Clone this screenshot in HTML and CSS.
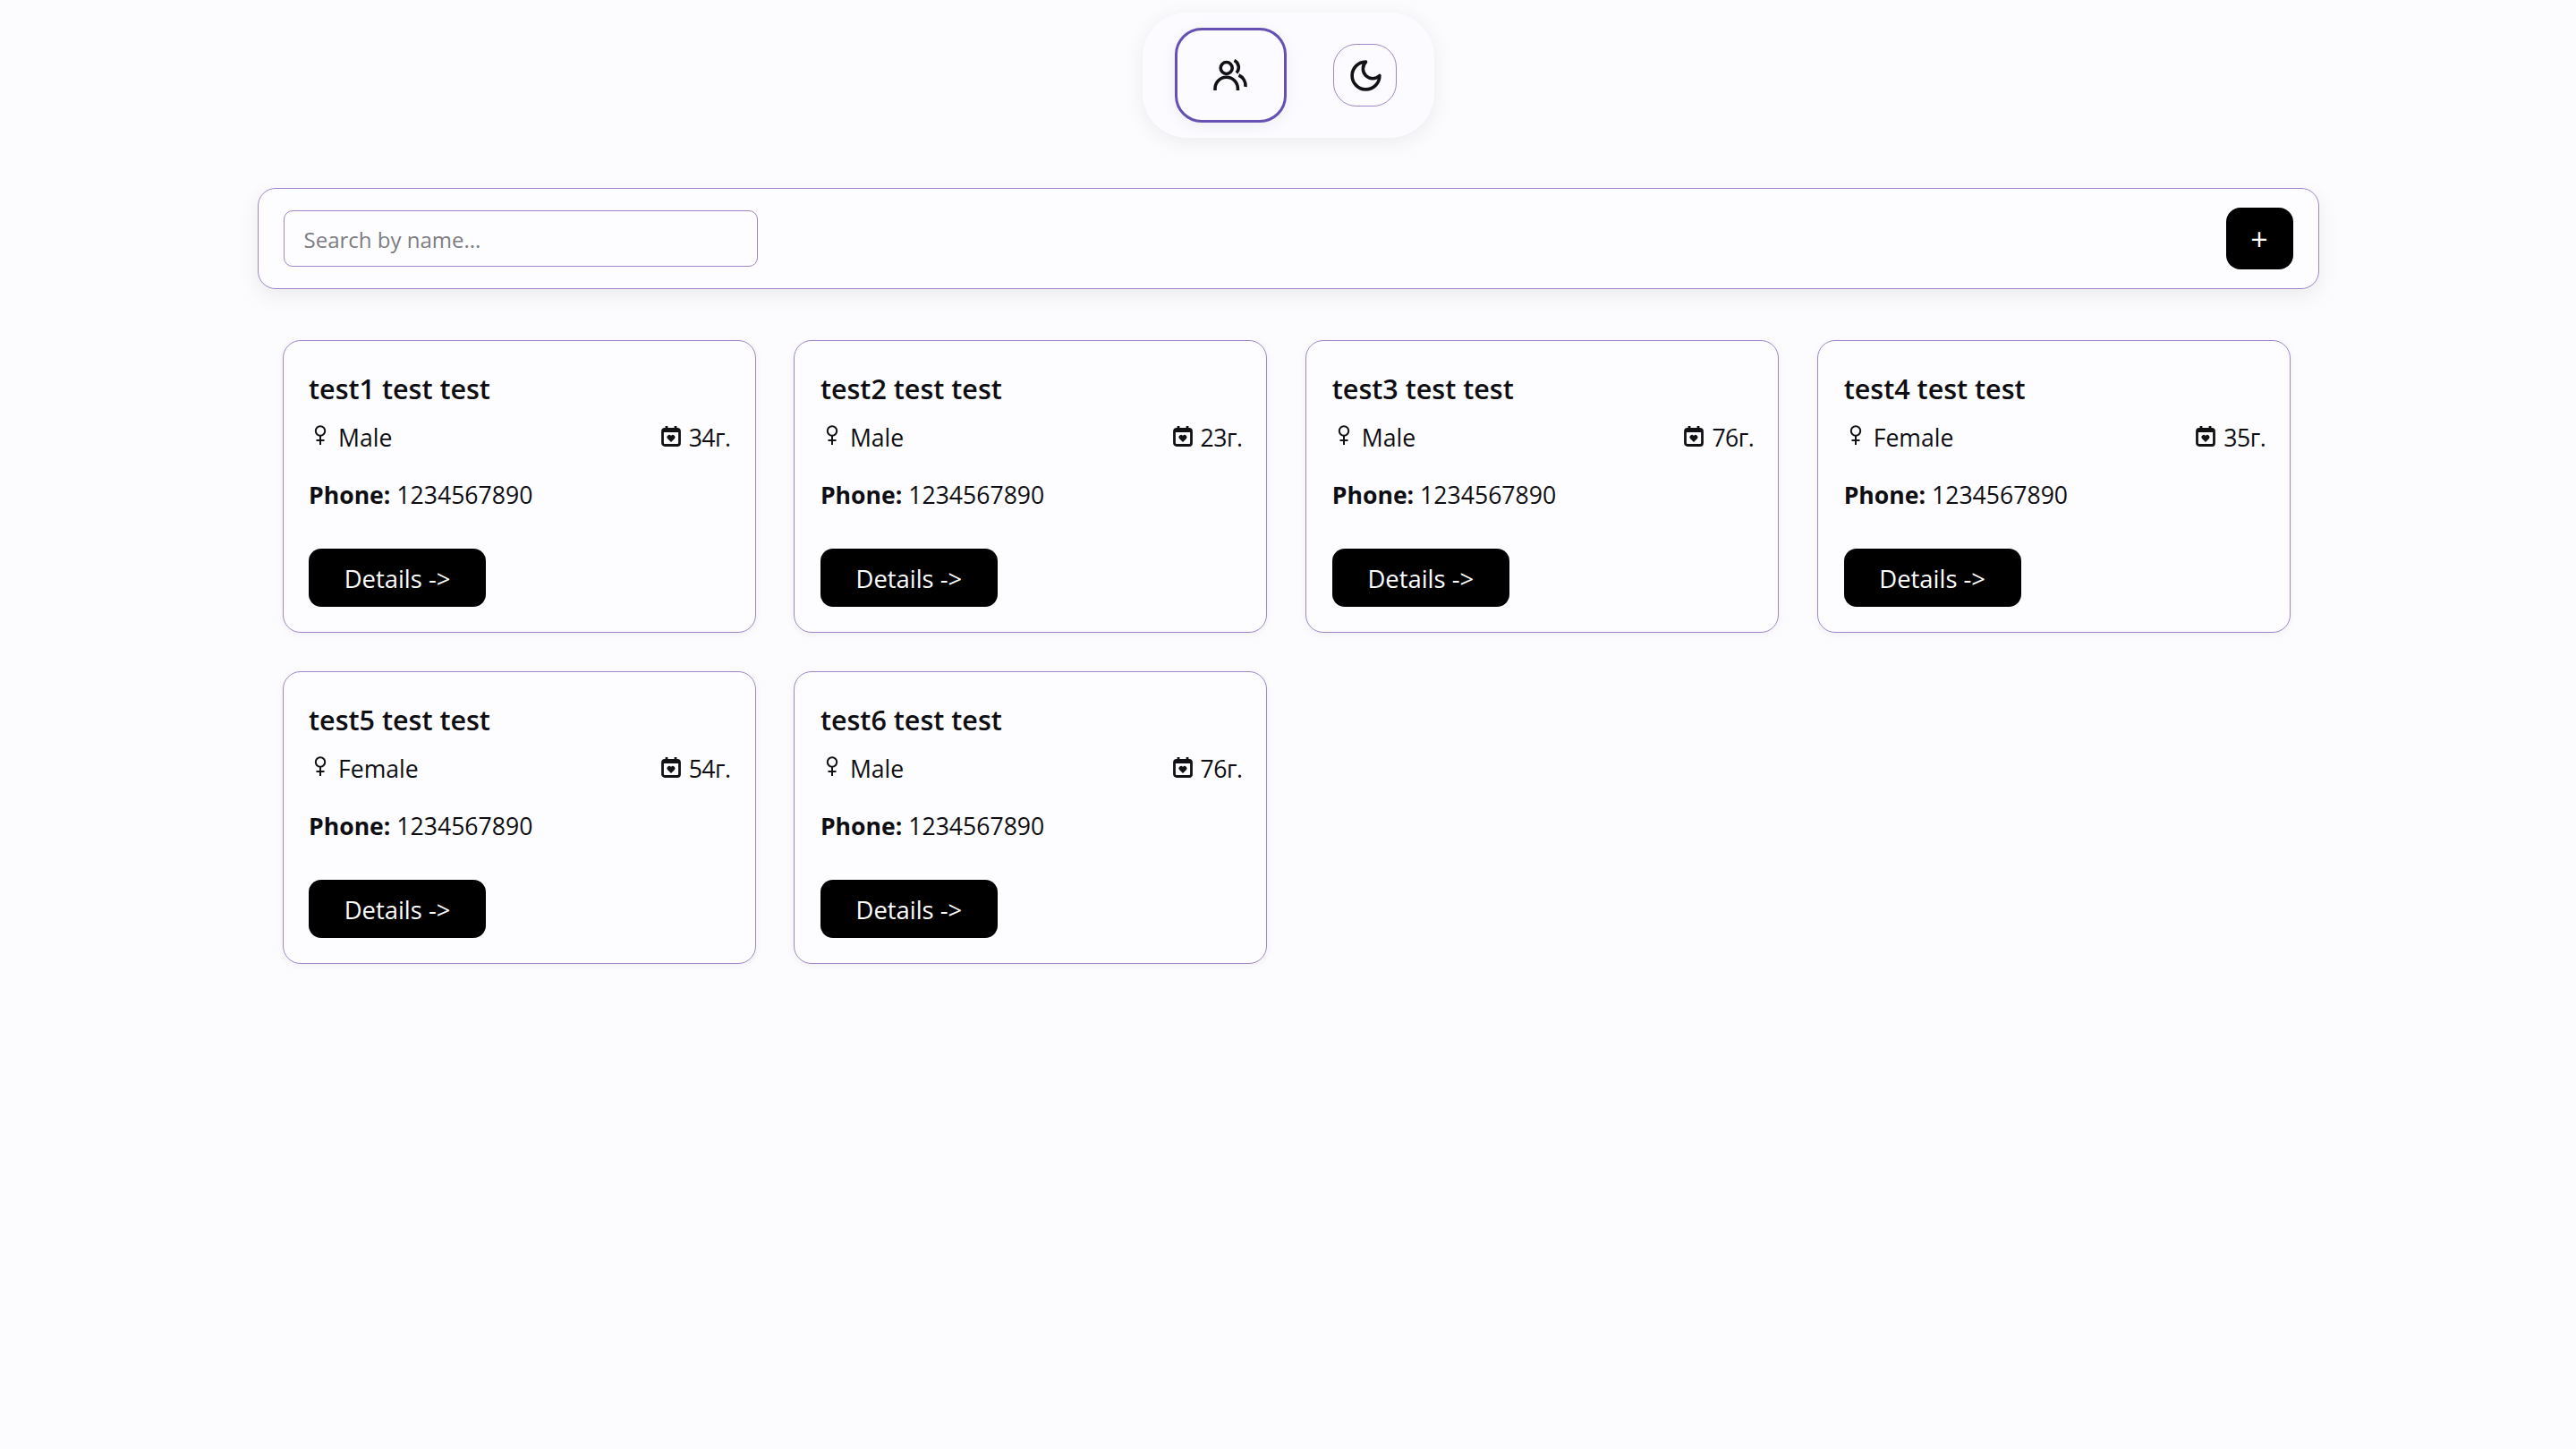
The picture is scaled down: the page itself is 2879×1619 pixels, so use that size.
FILE: index.html
```html
<!DOCTYPE html>
<html lang="en">
<head>
    <meta charset="UTF-8">
    <title>Patients</title>
    <link rel="stylesheet" href="styles.css">
</head>
<body>
    <div class="nav-wrap">
        <nav class="nav-pill">
            <button class="nav-btn active">
                <svg class="icon-users" viewBox="0 0 40 36"><circle cx="15.7" cy="10" r="6.5"/><path d="M3 35v-2a12.7 12.7 0 0 1 25.400 0v2"/><path d="M24.500 1.500a9 9 0 0 1 2.500 14"/><path d="M29.500 18a13 13 0 0 1 7.500 13"/></svg>
            </button>
            <button class="nav-btn theme">
                <svg class="icon-moon" viewBox="0 0 24 24"><path d="M12 3a6 6 0 0 0 9 9 9 9 0 1 1-9-9Z"/></svg>
            </button>
        </nav>
    </div>

    <main class="content">
        <div class="search-bar">
            <input class="search-input" type="text" placeholder="Search by name...">
            <button class="add-btn">+</button>
        </div>

        <section class="cards">
            <article class="card">
                <h3 class="card-name">test1 test test</h3>
                <div class="card-meta">
                    <span class="meta-item"><svg class="icon-gender" viewBox="0 0 14 22"><circle cx="7" cy="6.5" r="5.2"/><path d="M7 12v10M2.500 17h9"/></svg>Male</span>
                    <span class="meta-item age"><svg class="icon-cal" viewBox="0 0 22 23"><rect x="1.5" y="3.5" width="19" height="18" rx="2.5"/><path d="M6 0v4M16 0v4M1.500 5.500h19"/><path class="heart" d="M11 18l-4-4a2.400 2.400 0 0 1 4-3 2.400 2.400 0 0 1 4 3z"/></svg>34г.</span>
                </div>
                <p class="card-phone"><b>Phone:</b> 1234567890</p>
                <button class="details-btn">Details -&gt;</button>
            </article>
            <article class="card">
                <h3 class="card-name">test2 test test</h3>
                <div class="card-meta">
                    <span class="meta-item"><svg class="icon-gender" viewBox="0 0 14 22"><circle cx="7" cy="6.5" r="5.2"/><path d="M7 12v10M2.500 17h9"/></svg>Male</span>
                    <span class="meta-item age"><svg class="icon-cal" viewBox="0 0 22 23"><rect x="1.5" y="3.5" width="19" height="18" rx="2.5"/><path d="M6 0v4M16 0v4M1.500 5.500h19"/><path class="heart" d="M11 18l-4-4a2.400 2.400 0 0 1 4-3 2.400 2.400 0 0 1 4 3z"/></svg>23г.</span>
                </div>
                <p class="card-phone"><b>Phone:</b> 1234567890</p>
                <button class="details-btn">Details -&gt;</button>
            </article>
            <article class="card">
                <h3 class="card-name">test3 test test</h3>
                <div class="card-meta">
                    <span class="meta-item"><svg class="icon-gender" viewBox="0 0 14 22"><circle cx="7" cy="6.5" r="5.2"/><path d="M7 12v10M2.500 17h9"/></svg>Male</span>
                    <span class="meta-item age"><svg class="icon-cal" viewBox="0 0 22 23"><rect x="1.5" y="3.5" width="19" height="18" rx="2.5"/><path d="M6 0v4M16 0v4M1.500 5.500h19"/><path class="heart" d="M11 18l-4-4a2.400 2.400 0 0 1 4-3 2.400 2.400 0 0 1 4 3z"/></svg>76г.</span>
                </div>
                <p class="card-phone"><b>Phone:</b> 1234567890</p>
                <button class="details-btn">Details -&gt;</button>
            </article>
            <article class="card">
                <h3 class="card-name">test4 test test</h3>
                <div class="card-meta">
                    <span class="meta-item"><svg class="icon-gender" viewBox="0 0 14 22"><circle cx="7" cy="6.5" r="5.2"/><path d="M7 12v10M2.500 17h9"/></svg>Female</span>
                    <span class="meta-item age"><svg class="icon-cal" viewBox="0 0 22 23"><rect x="1.5" y="3.5" width="19" height="18" rx="2.5"/><path d="M6 0v4M16 0v4M1.500 5.500h19"/><path class="heart" d="M11 18l-4-4a2.400 2.400 0 0 1 4-3 2.400 2.400 0 0 1 4 3z"/></svg>35г.</span>
                </div>
                <p class="card-phone"><b>Phone:</b> 1234567890</p>
                <button class="details-btn">Details -&gt;</button>
            </article>
            <article class="card">
                <h3 class="card-name">test5 test test</h3>
                <div class="card-meta">
                    <span class="meta-item"><svg class="icon-gender" viewBox="0 0 14 22"><circle cx="7" cy="6.5" r="5.2"/><path d="M7 12v10M2.500 17h9"/></svg>Female</span>
                    <span class="meta-item age"><svg class="icon-cal" viewBox="0 0 22 23"><rect x="1.5" y="3.5" width="19" height="18" rx="2.5"/><path d="M6 0v4M16 0v4M1.500 5.500h19"/><path class="heart" d="M11 18l-4-4a2.400 2.400 0 0 1 4-3 2.400 2.400 0 0 1 4 3z"/></svg>54г.</span>
                </div>
                <p class="card-phone"><b>Phone:</b> 1234567890</p>
                <button class="details-btn">Details -&gt;</button>
            </article>
            <article class="card">
                <h3 class="card-name">test6 test test</h3>
                <div class="card-meta">
                    <span class="meta-item"><svg class="icon-gender" viewBox="0 0 14 22"><circle cx="7" cy="6.5" r="5.2"/><path d="M7 12v10M2.500 17h9"/></svg>Male</span>
                    <span class="meta-item age"><svg class="icon-cal" viewBox="0 0 22 23"><rect x="1.5" y="3.5" width="19" height="18" rx="2.5"/><path d="M6 0v4M16 0v4M1.500 5.500h19"/><path class="heart" d="M11 18l-4-4a2.400 2.400 0 0 1 4-3 2.400 2.400 0 0 1 4 3z"/></svg>76г.</span>
                </div>
                <p class="card-phone"><b>Phone:</b> 1234567890</p>
                <button class="details-btn">Details -&gt;</button>
            </article>
        </section>
    </main>
</body>
</html>
```

FILE: styles.css
```css
* {
    box-sizing: border-box;
}
html, body {
    height: 100%;
}
body {
    margin: 0;
    background-color: #fcfcff;
    color: #0d0d12;
    font-family: "Open Sans", "Noto Sans", sans-serif;
    font-size: 26.6px;
}
button {
    font-family: inherit;
    cursor: pointer;
}

.nav-wrap {
    display: flex;
    justify-content: center;
    padding-top: 14px;
}
.nav-pill {
    display: flex;
    align-items: center;
    gap: 52px;
    width: 326px;
    height: 140px;
    padding: 0 42px 0 36px;
    border-radius: 50px;
    background-color: #fcfbff;
    box-shadow: 0 4px 24px rgba(0, 0, 0, 0.07);
}
.nav-btn {
    display: flex;
    align-items: center;
    justify-content: center;
    padding: 0;
    background-color: #fcfbff;
}
.nav-btn.active {
    width: 125px;
    height: 106px;
    border: 3.5px solid #6650b4;
    border-radius: 30px;
    box-shadow: 0 4px 18px rgba(0, 0, 0, 0.06);
}
.nav-btn.theme {
    width: 71px;
    height: 70px;
    border: 1px solid #a085c8;
    border-radius: 26px;
}
.icon-users {
    width: 40px;
    height: 36px;
    fill: none;
    stroke: #121216;
    stroke-width: 3.6;
}
.icon-moon {
    width: 41px;
    height: 41px;
    margin-left: 3px;
    fill: none;
    stroke: #121216;
    stroke-width: 2.1;
    stroke-linejoin: round;
}

.content {
    width: 2304px;
    margin: 56px auto 0;
}
.search-bar {
    display: flex;
    align-items: center;
    justify-content: space-between;
    height: 113px;
    padding: 0 28px;
    border: 1px solid #a085c8;
    border-radius: 20px;
    background-color: #fdfdff;
    box-shadow: 0 8px 24px rgba(0, 0, 0, 0.07);
}
.search-input {
    width: 530px;
    height: 63px;
    padding: 1px 22px 0;
    border: 1px solid #a085c8;
    border-radius: 10px;
    background: transparent;
    font-family: inherit;
    font-size: 24px;
    outline: none;
}
.search-input::placeholder {
    color: #7c7c82;
    opacity: 1;
}
.add-btn {
    width: 75px;
    height: 69px;
    padding: 0;
    border: none;
    border-radius: 16px;
    background-color: #000;
    color: #fff;
    font-size: 34px;
}

.cards {
    display: grid;
    grid-template-columns: repeat(4, 529px);
    column-gap: 42.9px;
    row-gap: 43.5px;
    margin-top: 57px;
    padding: 0 28px;
}
.card {
    display: flex;
    flex-direction: column;
    align-items: flex-start;
    height: 326.5px;
    padding: 32px 27px 0 28.5px;
    border: 1px solid #a085c8;
    border-radius: 20px;
    background-color: #fdfdff;
    box-shadow: 0 2px 8px rgba(0, 0, 0, 0.05);
}
.card-name {
    margin: 0;
    font-size: 30.5px;
    font-weight: 650;
    line-height: 42px;
}
.card-meta {
    display: flex;
    justify-content: space-between;
    width: 100%;
    margin-top: 14px;
    line-height: 40px;
}
.meta-item {
    display: flex;
    align-items: center;
    gap: 13px;
}
.meta-item.age {
    gap: 9px;
    letter-spacing: -0.5px;
}
.icon-gender {
    width: 14px;
    height: 22px;
    margin: -6px 0 0 6px;
    fill: none;
    stroke: #121216;
    stroke-width: 2;
}
.icon-cal {
    width: 22px;
    height: 23px;
    margin-top: -4px;
    fill: none;
    stroke: #121216;
    stroke-width: 2.8;
}
.icon-cal .heart {
    fill: #121216;
    stroke: none;
}
.card-phone {
    margin: 24px 0 0;
    line-height: 40px;
}
.card-phone b {
    font-weight: 700;
}
.details-btn {
    width: 198px;
    height: 65px;
    margin-top: 40px;
    padding: 2px 0 0;
    border: none;
    border-radius: 14px;
    background-color: #000;
    color: #fff;
    font-size: 27.4px;
}
```
